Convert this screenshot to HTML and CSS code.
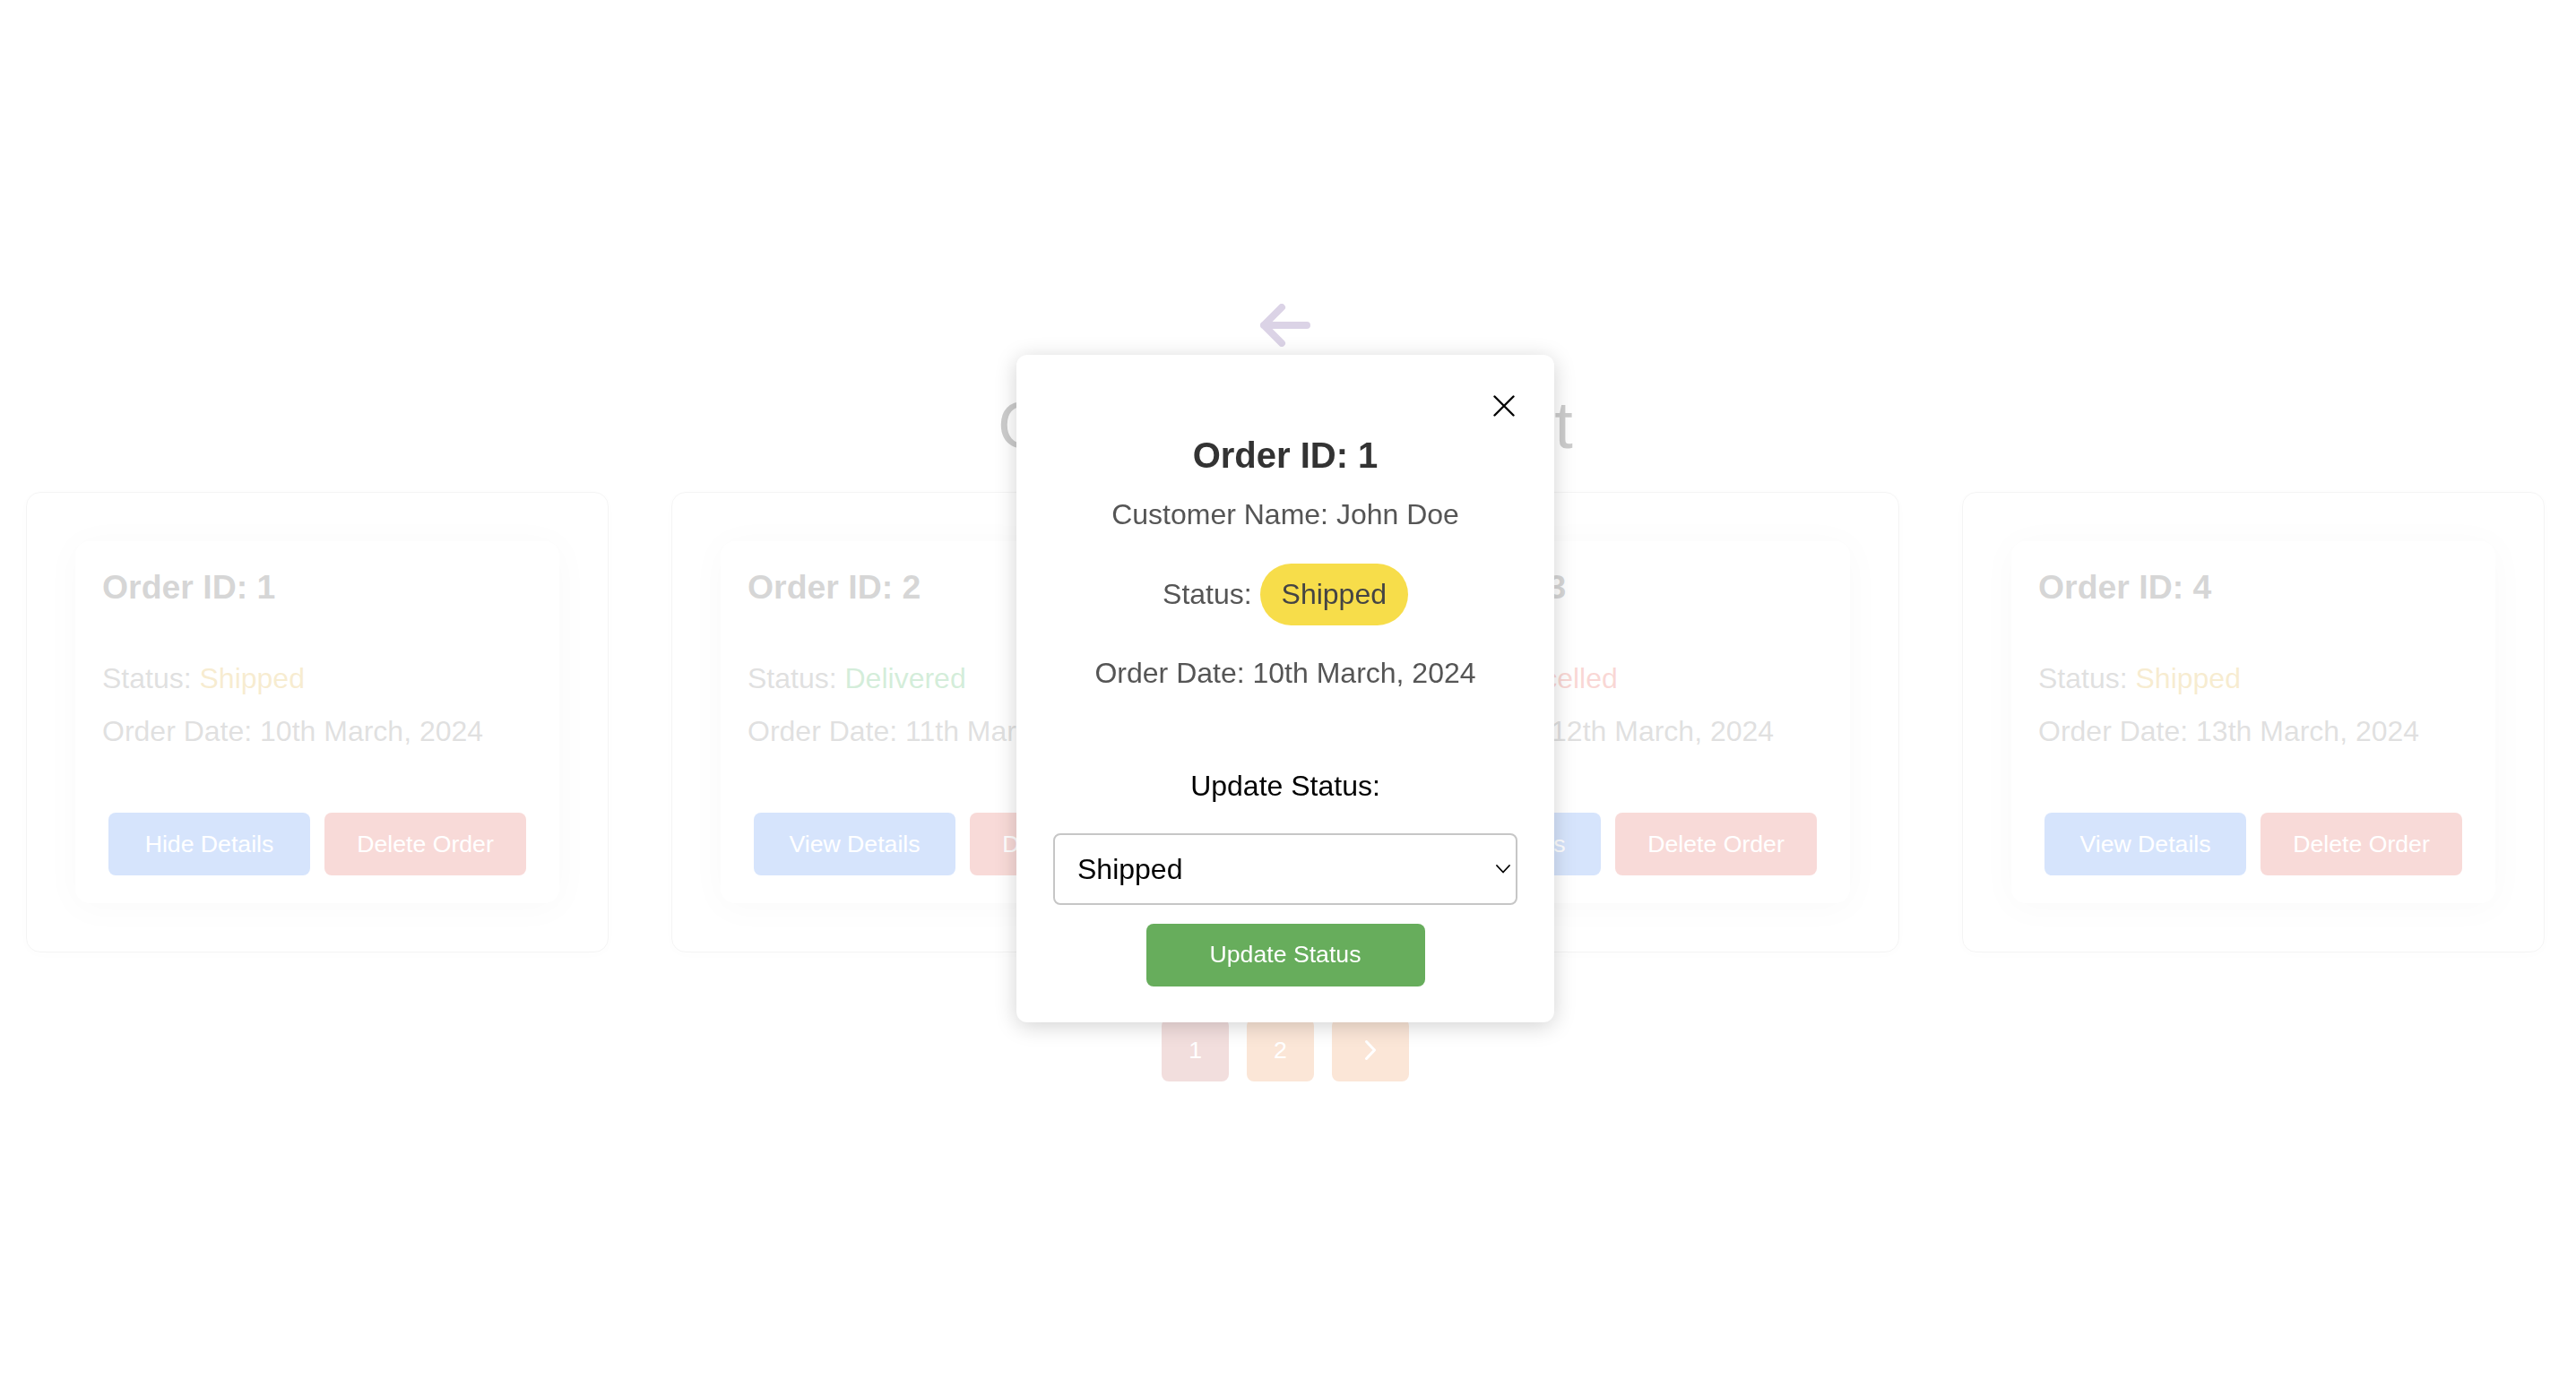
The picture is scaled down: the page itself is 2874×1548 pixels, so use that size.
FILE: index.html
```html
<!DOCTYPE html>
<html lang="en">
<head>
<meta charset="utf-8">
<title>Order Management</title>
<link rel="stylesheet" href="styles.css">
</head>
<body>
<div class="page">
  <header class="page-header">
    <button class="back-btn" aria-label="Back">
      <svg width="56" height="48" viewBox="0 0 56 48" fill="none" stroke="currentColor" stroke-width="8" stroke-linecap="round" stroke-linejoin="round"><path d="M52 24H4M24 4L4 24l20 20"/></svg>
    </button>
    <h1 class="page-title">Order Management</h1>
  </header>

  <section class="orders">
    <div class="order-slot">
      <article class="order-card">
        <h3 class="order-id">Order ID: 1</h3>
        <p class="order-line order-status">Status: <span class="status-shipped">Shipped</span></p>
        <p class="order-line order-date">Order Date: 10th March, 2024</p>
        <div class="order-actions">
          <button class="btn btn-blue">Hide Details</button>
          <button class="btn btn-red">Delete Order</button>
        </div>
      </article>
    </div>
    <div class="order-slot">
      <article class="order-card">
        <h3 class="order-id">Order ID: 2</h3>
        <p class="order-line order-status">Status: <span class="status-delivered">Delivered</span></p>
        <p class="order-line order-date">Order Date: 11th March, 2024</p>
        <div class="order-actions">
          <button class="btn btn-blue">View Details</button>
          <button class="btn btn-red">Delete Order</button>
        </div>
      </article>
    </div>
    <div class="order-slot">
      <article class="order-card">
        <h3 class="order-id">Order ID: 3</h3>
        <p class="order-line order-status">Status: <span class="status-cancelled">Cancelled</span></p>
        <p class="order-line order-date">Order Date: 12th March, 2024</p>
        <div class="order-actions">
          <button class="btn btn-blue">View Details</button>
          <button class="btn btn-red">Delete Order</button>
        </div>
      </article>
    </div>
    <div class="order-slot">
      <article class="order-card">
        <h3 class="order-id">Order ID: 4</h3>
        <p class="order-line order-status">Status: <span class="status-shipped">Shipped</span></p>
        <p class="order-line order-date">Order Date: 13th March, 2024</p>
        <div class="order-actions">
          <button class="btn btn-blue">View Details</button>
          <button class="btn btn-red">Delete Order</button>
        </div>
      </article>
    </div>
  </section>

  <nav class="pagination">
    <button class="page-btn active">1</button>
    <button class="page-btn">2</button>
    <button class="page-btn" aria-label="Next page">
      <svg width="26" height="30" viewBox="0 0 26 30" fill="none" stroke="currentColor" stroke-width="3" stroke-linecap="round" stroke-linejoin="round"><path d="M8.5 5.5l9 9.5-9 9.5"/></svg>
    </button>
  </nav>
</div>

<div class="overlay">
  <div class="modal">
    <button class="modal-close" aria-label="Close">
      <svg width="24" height="24" viewBox="0 0 24 24" fill="none" stroke="currentColor" stroke-width="2.4" stroke-linecap="round"><path d="M1.5 1.5l21 21M22.5 1.5l-21 21"/></svg>
    </button>
    <h2 class="modal-title">Order ID: 1</h2>
    <p class="modal-line modal-customer">Customer Name: John Doe</p>
    <p class="modal-line modal-status">Status: <span class="pill">Shipped</span></p>
    <p class="modal-line modal-date">Order Date: 10th March, 2024</p>
    <label class="modal-label" for="status-select">Update Status:</label>
    <div class="select-wrap">
      <select id="status-select" class="status-select">
        <option>Pending</option>
        <option selected>Shipped</option>
        <option>Delivered</option>
        <option>Cancelled</option>
      </select>
      <svg class="select-chevron" width="16" height="10" viewBox="0 0 16 10" fill="none" stroke="currentColor" stroke-width="1.8" stroke-linecap="round" stroke-linejoin="round"><path d="M1 1l7 7.5L15 1"/></svg>
    </div>
    <button class="update-btn">Update Status</button>
  </div>
</div>
</body>
</html>
```

FILE: styles.css
```css
* {
  box-sizing: border-box;
}

html,
body {
  margin: 0;
}

body {
  font-family: "Liberation Sans", Arial, Helvetica, sans-serif;
  background: #fff;
  color: #333;
}

button,
select {
  font-family: inherit;
}

/* ---------- page behind the modal ---------- */

.page {
  min-height: 1548px;
  padding: 339px 35px 0 29px;
  display: flex;
  flex-direction: column;
  align-items: center;
}

.page-header {
  display: flex;
  flex-direction: column;
  align-items: center;
}

.back-btn {
  display: block;
  padding: 0;
  border: 0;
  background: none;
  color: #4b2382;
  line-height: 0;
  cursor: pointer;
}

.back-btn svg {
  display: block;
}

.page-title {
  margin: 45px 0 0;
  font-size: 74px;
  line-height: 85px;
  font-weight: 400;
  color: #000;
}

.orders {
  align-self: stretch;
  display: flex;
  gap: 70px;
  margin-top: 32px;
}

.order-slot {
  flex: 0 0 650px;
  padding: 54px;
  border: 1px solid #c8c8c8;
  border-radius: 16px;
  background: #fff;
  box-shadow: 0 2px 12px rgba(0, 0, 0, 0.06);
}

.order-card {
  padding: 30px 30px 31px;
  border-radius: 16px;
  background: #fff;
  box-shadow: 0 4px 40px rgba(0, 0, 0, 0.13);
}

.order-id {
  margin: 0;
  font-size: 37.44px;
  line-height: 43px;
  font-weight: 700;
  color: #333;
}

.order-line {
  margin: 0;
  font-size: 32px;
  line-height: 37px;
  color: #666;
}

.order-status {
  margin-top: 62px;
}

.order-date {
  margin-top: 22px;
}

.status-shipped {
  color: #d4a017;
}

.status-delivered {
  color: #28a745;
}

.status-cancelled {
  color: #e03a2e;
}

.order-actions {
  display: flex;
  justify-content: center;
  gap: 16px;
  margin-top: 72px;
}

.btn {
  width: 225px;
  height: 70px;
  border: 0;
  border-radius: 8px;
  color: #fff;
  font-size: 26.67px;
  cursor: pointer;
}

.btn-blue {
  background: #357af0;
}

.btn-red {
  background: #d9473c;
}

.pagination {
  display: flex;
  gap: 20px;
  margin-top: 74px;
}

.page-btn {
  display: inline-flex;
  align-items: center;
  justify-content: center;
  height: 70px;
  padding: 0 30px;
  border: 0;
  border-radius: 8px;
  background: #e9813a;
  color: #fff;
  font-size: 26.67px;
  line-height: 30px;
  cursor: pointer;
}

.page-btn svg {
  display: block;
}

.page-btn.active {
  background: #bd5b58;
}

/* ---------- modal ---------- */

.overlay {
  position: fixed;
  inset: 0;
  display: flex;
  align-items: center;
  justify-content: center;
  padding: 0 6px 12px 0;
  background: rgba(255, 255, 255, 0.8);
}

.modal {
  position: relative;
  width: 600px;
  padding: 40px 41px;
  border-radius: 12px;
  background: #fff;
  box-shadow: 0 4px 24px rgba(0, 0, 0, 0.18);
  text-align: center;
}

.modal-close {
  position: absolute;
  top: 45px;
  right: 44px;
  width: 24px;
  height: 24px;
  padding: 0;
  border: 0;
  background: none;
  color: #000;
  cursor: pointer;
}

.modal-close svg {
  display: block;
}

.modal-title {
  margin: 49px 0 0;
  font-size: 40px;
  line-height: 46px;
  font-weight: 700;
  color: #333;
}

.modal-line {
  margin: 0;
  font-size: 32px;
  line-height: 37px;
  color: #555;
}

.modal-customer {
  margin-top: 25px;
}

.modal-status {
  margin-top: 36px;
}

.modal-date {
  margin-top: 35px;
}

.pill {
  display: inline-block;
  padding: 16px 24px;
  border-radius: 999px;
  background: #f7dd4a;
  color: #444;
}

.modal-label {
  display: block;
  margin-top: 89px;
  font-size: 32px;
  line-height: 37px;
  color: #000;
}

.select-wrap {
  position: relative;
  margin-top: 34px;
}

.status-select {
  display: block;
  width: 100%;
  height: 80px;
  padding: 0 25px;
  border: 2px solid #c6c6c6;
  border-radius: 8px;
  background: #fff;
  color: #000;
  font-size: 32px;
  text-align: left;
  appearance: none;
  -webkit-appearance: none;
}

.select-chevron {
  position: absolute;
  top: 35px;
  right: 8px;
  color: #000;
  pointer-events: none;
}

.update-btn {
  display: block;
  width: 311px;
  height: 70px;
  margin: 21px auto 0;
  border: 0;
  border-radius: 8px;
  background: #67ad5c;
  color: #fff;
  font-size: 26.67px;
  cursor: pointer;
}
```
